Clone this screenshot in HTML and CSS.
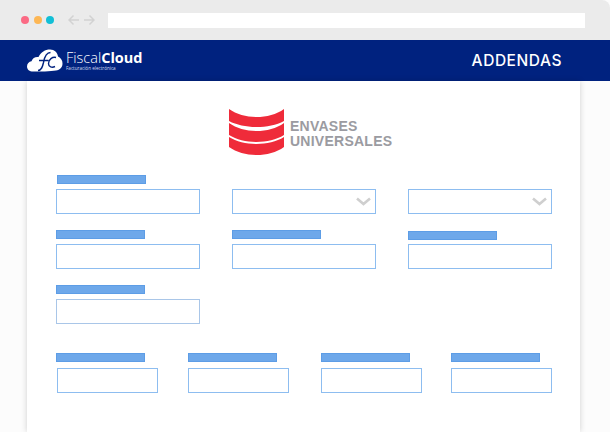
FILE: index.html
```html
<!DOCTYPE html>
<html lang="es">
<head>
<meta charset="utf-8">
<title>Addendas</title>
<link rel="stylesheet" href="styles.css">
</head>
<body>
<div class="window">
  <div class="chrome">
    <div class="dots"><span class="dot red"></span><span class="dot amber"></span><span class="dot teal"></span></div>
    <svg class="arrows" width="27" height="12" viewBox="0 0 27 12" fill="none" stroke="#d2d2d2" stroke-width="1.5"><path d="M1 6H11M5.500 1.500L1 6L5.500 10.500"/><path d="M26 6H16M21.500 1.500L26 6L21.500 10.500"/></svg>
    <div class="address"></div>
  </div>
  <header class="topbar">
    <div class="brand">
      <svg class="cloud" width="36" height="24" viewBox="0 0 36 24"><path fill="#fff" d="M6 22.500C2.500 22.500 0 20.500 0 17.500C0 14.500 2 12.800 4.500 12.300C5.500 9 8.500 7.500 11.500 8C14 3 18 .5 23 .5C27.500 .5 30.500 3.500 31 7.500C34 9 35.500 11.500 35.500 14.500C35.500 18.500 33 21 29 21.500C24 22.500 12 22.500 6 22.500Z"/><path fill="none" stroke="#00227f" stroke-width="1.400" d="M11 21.500C14.500 21.500 15.500 18 16.500 13.500C17.500 8 19 3.500 23.500 3.500M12 11.500H21.500M29 8.500C25.500 7.500 21.500 10.500 21.500 14.500C21.500 18 25 19 28 17.500"/></svg>
      <div class="brand-text">
        <div class="brand-name">Fiscal<b>Cloud</b></div>
        <div class="brand-sub">Facturación electrónica</div>
      </div>
    </div>
    <div class="page-title">ADDENDAS</div>
  </header>
  <main class="card">
    <div class="logo">
      <svg width="56" height="48" viewBox="0 0 56 48" fill="#ef2b3a"><path d="M0 0C15 10.700 40 10.700 55 0V12C40 20 15 20 0 12Z"/><path d="M0 14C15 24.700 40 24.700 55 14V26C40 35.300 15 35.300 0 26Z"/><path d="M0 28C15 37.300 40 37.300 55 28V38C40 48.700 15 48.700 0 38Z"/></svg>
      <div class="logo-text">ENVASES<br>UNIVERSALES</div>
    </div>
    <div class="grid-three">
      <div class="field shifted-label"><span class="label"></span><span class="input"></span></div>
      <div class="field no-label"><span class="input select"><svg width="15" height="9" viewBox="0 0 15 9" fill="none" stroke="#cfcfcf" stroke-width="2.600"><path d="M1 1.500L7.500 7L14 1.500"/></svg></span></div>
      <div class="field no-label"><span class="input select"><svg width="15" height="9" viewBox="0 0 15 9" fill="none" stroke="#cfcfcf" stroke-width="2.600"><path d="M1 1.500L7.500 7L14 1.500"/></svg></span></div>
      <div class="field"><span class="label"></span><span class="input"></span></div>
      <div class="field"><span class="label"></span><span class="input"></span></div>
      <div class="field low-label"><span class="label"></span><span class="input"></span></div>
      <div class="field"><span class="label"></span><span class="input input-muted"></span></div>
    </div>
    <div class="grid-four">
      <div class="field small offset-input"><span class="label"></span><span class="input"></span></div>
      <div class="field small"><span class="label"></span><span class="input"></span></div>
      <div class="field small"><span class="label"></span><span class="input"></span></div>
      <div class="field small"><span class="label"></span><span class="input"></span></div>
    </div>
  </main>
</div>
</body>
</html>
```
FILE: styles.css
```css
* { box-sizing: border-box; }
html, body { margin: 0; height: 100%; background: #fff; overflow: hidden; }
.window { width: 610px; height: 432px; display: flex; flex-direction: column; background: #fcfcfc; }
.chrome { height: 40px; flex: none; background: #ebebeb; border-radius: 0 8px 0 0; display: flex; align-items: center; padding: 0 25px 0 21px; }
.dots { display: flex; gap: 4.500px; width: 47px; }
.dot { width: 8px; height: 8px; border-radius: 50%; }
.red { background: #fb6a84; }
.amber { background: #fdb755; }
.teal { background: #12bfd6; }
.arrows { margin-right: 13px; }
.address { flex: 1; height: 15px; background: #fff; margin-top: 1px; }
.topbar { height: 41px; flex: none; background: #00227f; display: flex; align-items: center; justify-content: space-between; padding: 0 48px 0 27px; color: #fff; }
.brand { display: flex; align-items: center; gap: 3px; }
.brand-text { display: flex; flex-direction: column; gap: 2px; }
.brand-name { font: 300 14.500px/13px "Open Sans", sans-serif; white-space: nowrap; }
.brand-name b { font-weight: 700; }
.brand-sub { font: 400 4.600px/5px "Open Sans", sans-serif; color: #d7def0; }
.page-title { font: 500 15.500px/20px Inter, sans-serif; letter-spacing: .55px; }
.card { flex: 1; width: 553px; margin-left: 27px; background: #fff; box-shadow: 0 0 6px rgba(0,0,0,.18); padding: 27px 28px 0 29px; }
.logo { display: flex; align-items: center; gap: 5px; height: 49px; padding-left: 173px; }
.logo-text { font: 700 14px/15px "Liberation Sans", sans-serif; color: #9b9ba1; letter-spacing: .25px; margin-top: 3px; white-space: nowrap; }
.grid-three { display: grid; grid-template-columns: repeat(3, 144px); column-gap: 32px; row-gap: 16px; margin-top: 18px; }
.grid-four { display: grid; grid-template-columns: 132px 133px 130px 101px; margin-top: 29px; }
.field { display: flex; flex-direction: column; gap: 5px; }
.label { width: 89px; height: 9px; background: #6ea8ea; border: 1px solid #5d9de6; }
.input { height: 25px; border: 1px solid #8dbdf0; background: #fff; display: flex; align-items: center; justify-content: flex-end; padding-right: 4px; }
.input-muted { border-color: #a9c6e8; }
.no-label { justify-content: flex-end; }
.shifted-label .label { margin-left: 1px; }
.low-label .label { margin-top: 1px; margin-bottom: -1px; }
.small .input { width: 101px; }
.small { gap: 6px; }
.offset-input .input { margin-left: 1px; }
```
